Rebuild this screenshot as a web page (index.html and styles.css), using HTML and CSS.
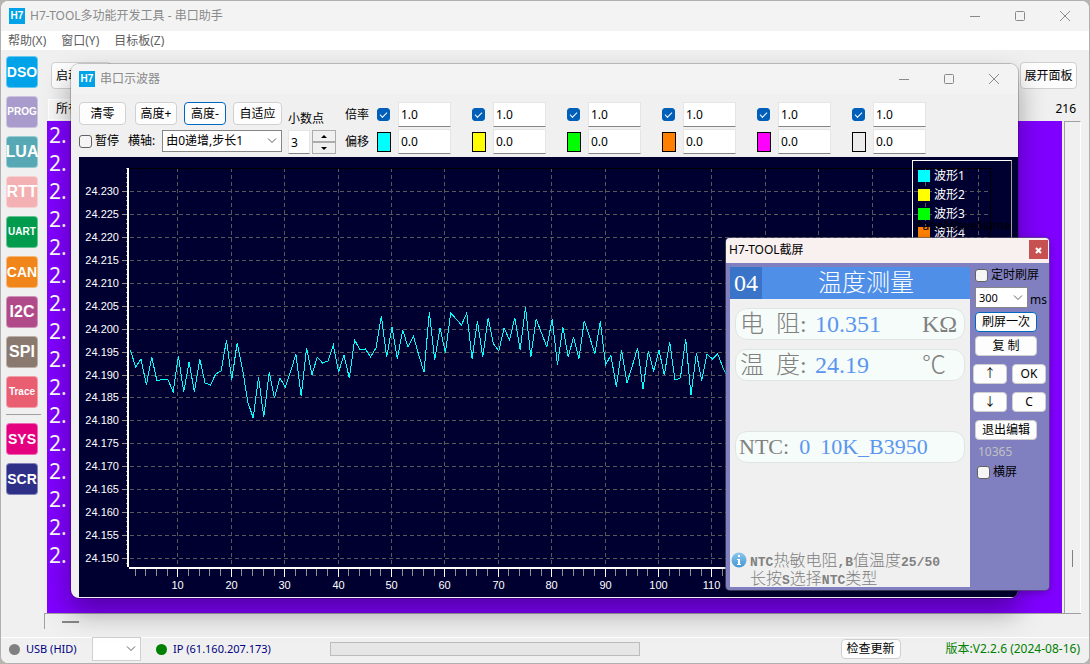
FILE: index.html
```html
<!DOCTYPE html>
<html lang="zh-CN">
<head>
    <meta charset="UTF-8">
    <title>H7-TOOL多功能开发工具 - 串口助手</title>
    <link rel="stylesheet" href="styles.css">
</head>
<body>
    <div class="app">
        <div class="titlebar">
            <span class="logo">H7</span>
            <span class="title">H7-TOOL多功能开发工具 - 串口助手</span>
            <button class="win-btn" aria-label="最小化"><svg width="12" height="12"><path d="M1 6.5h10"/></svg></button>
            <button class="win-btn" aria-label="最大化"><svg width="12" height="12"><rect x="1.5" y="1.5" width="9" height="9" rx="1"/></svg></button>
            <button class="win-btn" aria-label="关闭"><svg width="12" height="12"><path d="M1 1l10 10M11 1L1 11"/></svg></button>
        </div>
        <div class="menubar">
            <a href="#">帮助(X)</a>
            <a href="#">窗口(Y)</a>
            <a href="#">目标板(Z)</a>
        </div>
        <div class="main">
            <div class="side">
                <button class="tile dso">DSO</button>
                <button class="tile prog long">PROG</button>
                <button class="tile lua">LUA</button>
                <button class="tile rtt">RTT</button>
                <button class="tile uart long">UART</button>
                <button class="tile can">CAN</button>
                <button class="tile i2c">I2C</button>
                <button class="tile spi">SPI</button>
                <button class="tile trace long">Trace</button>
                <hr>
                <button class="tile sys">SYS</button>
                <button class="tile scr">SCR</button>
            </div>
            <div class="work">
                <div class="work-tools">
                    <button class="btn start">启动</button>
                    <button class="btn expand">展开面板</button>
                </div>
                <div class="work-tabs">
                    <button class="tab">所有</button>
                    <span class="count">216</span>
                </div>
                <div class="recv">
                    <textarea class="recv-text" aria-label="接收" readonly>2.
2.
2.
2.
2.
2.
2.
2.
2.
2.
2.
2.
2.
2.
2.
2.</textarea>
                    <div class="vscroll"><i></i></div>
                </div>
                <div class="hscroll"><i></i></div>
            </div>
        </div>
        <div class="status">
            <div class="panel usb"><i class="dot"></i>USB (HID)</div>
            <select class="port" aria-label="端口"><option></option></select>
            <div class="panel ip"><i class="dot green"></i>IP (61.160.207.173)</div>
            <div class="progress"></div>
            <button class="btn update">检查更新</button>
            <span class="version">版本:V2.2.6 (2024-08-16)</span>
        </div>

        <!-- 示波器窗口 -->
        <div class="wave">
            <div class="titlebar">
                <span class="logo">H7</span>
                <span class="title">串口示波器</span>
                <button class="win-btn" aria-label="最小化"><svg width="12" height="12"><path d="M1 6.5h10"/></svg></button>
                <button class="win-btn" aria-label="最大化"><svg width="12" height="12"><rect x="1.5" y="1.5" width="9" height="9" rx="1"/></svg></button>
                <button class="win-btn" aria-label="关闭"><svg width="12" height="12"><path d="M1 1l10 10M11 1L1 11"/></svg></button>
            </div>
            <div class="wave-tools">
                <div class="cmds">
                    <div class="row">
                        <button class="btn">清零</button>
                        <button class="btn">高度+</button>
                        <button class="btn focus">高度-</button>
                        <button class="btn">自适应</button>
                    </div>
                    <div class="row axis-row">
                        <label class="tick"><input type="checkbox">暂停</label>
                        <label for="xaxis">横轴:</label>
                        <select id="xaxis"><option>由0递增,步长1</option></select>
                    </div>
                </div>
                <div class="digits">
                    <label for="dec">小数点</label>
                    <div class="spin">
                        <input id="dec" type="text" value="3">
                        <div class="updown">
                            <button aria-label="增加"><i class="up"></i></button>
                            <button aria-label="减少"><i class="down"></i></button>
                        </div>
                    </div>
                </div>
                <div class="names"><span>倍率</span><span>偏移</span></div>
                <div class="channels">
                    <div class="ch">
                        <input type="checkbox" checked aria-label="波形1"><input type="text" value="1.0" aria-label="倍率1">
                        <i class="color c1"></i><input type="text" value="0.0" aria-label="偏移1">
                    </div>
                    <div class="ch">
                        <input type="checkbox" checked aria-label="波形2"><input type="text" value="1.0" aria-label="倍率2">
                        <i class="color c2"></i><input type="text" value="0.0" aria-label="偏移2">
                    </div>
                    <div class="ch">
                        <input type="checkbox" checked aria-label="波形3"><input type="text" value="1.0" aria-label="倍率3">
                        <i class="color c3"></i><input type="text" value="0.0" aria-label="偏移3">
                    </div>
                    <div class="ch">
                        <input type="checkbox" checked aria-label="波形4"><input type="text" value="1.0" aria-label="倍率4">
                        <i class="color c4"></i><input type="text" value="0.0" aria-label="偏移4">
                    </div>
                    <div class="ch">
                        <input type="checkbox" checked aria-label="波形5"><input type="text" value="1.0" aria-label="倍率5">
                        <i class="color c5"></i><input type="text" value="0.0" aria-label="偏移5">
                    </div>
                    <div class="ch">
                        <input type="checkbox" checked aria-label="波形6"><input type="text" value="1.0" aria-label="倍率6">
                        <i class="color c6"></i><input type="text" value="0.0" aria-label="偏移6">
                    </div>
                </div>
            </div>
            <div class="chart">
                <svg class="plot"></svg>
                <ul class="legend">
                    <li><i class="c1"></i><span>波形1</span></li>
                    <li><i class="c2"></i><span>波形2</span></li>
                    <li><i class="c3"></i><span>波形3</span></li>
                    <li><i class="c4"></i><span>波形4</span></li>
                </ul>
                <span class="panel-name">PanelWaveName</span>
            </div>
        </div>

        <!-- 截屏窗口 -->
        <div class="shot">
            <div class="shot-title">
                <span>H7-TOOL截屏</span>
                <button class="shot-close" aria-label="关闭"><svg width="7" height="7"><path d="M1 1l5 5M6 1L1 6"/></svg></button>
            </div>
            <div class="shot-body">
                <div class="lcd">
                    <div class="lcd-head"><b>04</b><span>温度测量</span></div>
                    <div class="lcd-row"><span class="name">电</span><span class="name">阻:</span><em>10.351</em><span class="unit">KΩ</span></div>
                    <div class="lcd-row"><span class="name">温</span><span class="name">度:</span><em>24.19</em><span class="unit">℃</span></div>
                    <div class="lcd-row ntc"><span>NTC:</span><em>0</em><em>10K_B3950</em></div>
                    <div class="lcd-tip">
                        <svg width="16" height="16">
                            <defs>
                                <linearGradient id="ball" x1="0" y1="0" x2="0" y2="1">
                                    <stop offset="0" stop-color="#8cc8ee"/>
                                    <stop offset="1" stop-color="#4496d2"/>
                                </linearGradient>
                            </defs>
                            <circle cx="8" cy="8" r="7.5" fill="url(#ball)"/>
                            <rect x="7" y="3" width="2" height="2" fill="#fff"/>
                            <path d="M6 7h3v5h1v1H6v-1h1V8H6z" fill="#fff"/>
                        </svg>
                        <p><b>NTC</b>热敏电阻<b>,B</b>值温度<b>25/50</b><br>长按<b>S</b>选择<b>NTC</b>类型</p>
                    </div>
                </div>
                <div class="shot-side">
                    <label class="tick"><input type="checkbox">定时刷屏</label>
                    <div class="timer">
                        <select id="ms"><option>300</option></select>
                        <label for="ms">ms</label>
                    </div>
                    <button class="btn focus">刷屏一次</button>
                    <button class="btn">复 制</button>
                    <div class="keys">
                        <button class="btn">↑</button>
                        <button class="btn">OK</button>
                        <button class="btn">↓</button>
                        <button class="btn">C</button>
                    </div>
                    <button class="btn">退出编辑</button>
                    <span class="bytes">10365</span>
                    <label class="tick land"><input type="checkbox">横屏</label>
                </div>
            </div>
        </div>
    </div>
    <script>
        var oPlot = document.querySelector('.plot');
        var NS = 'http://www.w3.org/2000/svg';
        var left = 50, top0 = 11, right = 912, bottom = 410;
        //采样点
        var data = [193,210,202,228,200,224,222,222,235,199,235,205,235,202,226,228,217,214,183,223,
            186,212,245,261,220,260,215,241,221,230,215,197,239,191,218,200,206,204,188,215,
            198,221,183,193,192,200,191,159,200,170,202,173,190,179,198,215,155,203,171,196,
            156,162,168,156,202,164,200,161,187,194,171,183,161,193,150,200,162,176,190,162,
            208,170,200,180,202,164,180,197,164,208,198,230,193,226,209,191,232,194,214,193,
            218,185,223,221,182,238,196,224,197,202,197,211,222];

        function add(name,attrs,text){
            var el = document.createElementNS(NS,name);
            for(var k in attrs){
                el.setAttribute(k,attrs[k]);
            }
            if(text) el.textContent = text;
            oPlot.appendChild(el);
        }

        function line(x1,y1,x2,y2,cls){
            add('line',{x1:x1,y1:y1,x2:x2,y2:y2,'class':cls});
        }

        function px(n){
            return 46 + 5.34 * n;
        }

        //横线和纵轴刻度
        for(var i=0;i<17;i++){
            var y = Math.round(34 + i * 22.94) + 0.5;
            line(left + 1,y,right,y,'grid');
            line(43,y,48,y,'minor');
            add('text',{x:40,y:Math.floor(y)+4,'class':'ylab'},(24.23 - i * 0.005).toFixed(3));
        }
        for(var j=-5;j<=81;j++){
            var my = Math.round(34 + j * 4.588) + 0.5;
            if(my < bottom) line(47,my,48,my,'minor');
        }

        //竖线和横轴刻度
        for(var n=2;n<=162;n+=2){
            var x = Math.round(px(n)) - 0.5;
            if(n % 10 == 0){
                line(x,top0,x,bottom,'grid');
                line(x,412,x,420,'major');
                if(n <= data.length) add('text',{x:x,y:432,'class':'xlab'},String(n));
            }else{
                line(x,412,x,419,'minor');
            }
        }

        line(left,top0 + 0.5,right,top0 + 0.5,'edge');
        line(right - 0.5,top0,right - 0.5,bottom,'edge');
        line(49,top0,49,bottom,'axis');
        line(left,411,right,411,'axis');

        var pts = [];
        for(var m=0;m<data.length;m++){
            pts.push(px(m + 1).toFixed(1) + ',' + data[m]);
        }
        add('polyline',{points:pts.join(' '),'class':'curve'});
    </script>
</body>
</html>
```

FILE: styles.css
```css
*{margin: 0;padding: 0;box-sizing: border-box;list-style: none;}
body{
    height: 100vh;
    background: #b9b4ae;
    font: 12px/16px "Noto Sans","Noto Sans CJK SC",sans-serif;
    color: #000;
    overflow: hidden;
}
button,input,select,textarea{
    font: inherit;
    color: inherit;
}
a{text-decoration: none;color: inherit;}
.app{
    position: relative;
    display: flex;
    flex-direction: column;
    height: 100vh;
    border: 1px solid #b0b0b0;
    border-radius: 8px;
    background: #f0f0f0;
    overflow: hidden;
}

/* 标题栏 */
.titlebar{
    display: flex;
    align-items: center;
    height: 30px;
    padding: 0 2px 0 8px;
    background: #f3f3f3;
    color: #8a8a8a;
}
.logo{
    width: 16px;
    height: 16px;
    margin-right: 5px;
    background: #00a2e8;
    color: #fff;
    font: bold 10px/16px "Liberation Sans",sans-serif;
    text-align: center;
}
.title{flex: 1;}
.win-btn{
    display: flex;
    align-items: center;
    justify-content: center;
    width: 45px;
    height: 30px;
    border: 0;
    background: none;
}
.win-btn svg{
    fill: none;
    stroke: #8a8a8a;
}
.menubar{
    display: flex;
    gap: 15px;
    height: 19px;
    padding-left: 7px;
    background: #fff;
    color: #606060;
    line-height: 20px;
}

/* 按钮和输入框 */
.btn{
    border: 1px solid #d0d0d0;
    border-radius: 4px;
    background: #fdfdfd;
    white-space: nowrap;
}
.btn.focus{border-color: #0067c0;}
input[type=checkbox]{
    appearance: none;
    width: 13px;
    height: 13px;
    border: 1px solid #626262;
    border-radius: 3px;
    background: #f5f5f5;
}
input[type=checkbox]:checked{
    border-color: #005fb8;
    background: #005fb8;
}
input[type=checkbox]:checked::before{
    content: "";
    display: block;
    width: 6px;
    height: 3px;
    margin: 3px auto 0;
    border: solid #fff;
    border-width: 0 0 1px 1px;
    transform: rotate(-45deg);
}
input[type=text]{
    border: 1px solid #e5e5e5;
    border-bottom-color: #868686;
    background: #fff;
}
select{
    appearance: none;
    border: 1px solid #868686;
    background: #fff url("data:image/svg+xml,%3Csvg xmlns='http://www.w3.org/2000/svg' width='10' height='6'%3E%3Cpath d='M1 .5l4 4 4-4' fill='none' stroke='%23606060'/%3E%3C/svg%3E") no-repeat right 4px center;
}
.tick{
    display: flex;
    align-items: center;
    gap: 3px;
}

/* 主界面 */
.main{
    flex: 1;
    display: flex;
    min-height: 0;
}
.side{
    display: flex;
    flex-direction: column;
    gap: 8px;
    width: 46px;
    padding: 6px 5px;
}
.side hr{
    width: 35px;
    margin-top: -2px;
    border: 0;
    border-top: 1px solid #a0a0a0;
}
.tile{
    width: 32px;
    height: 32px;
    border: 1px solid rgba(255,255,255,.4);
    border-radius: 4px;
    color: #fff;
    font: bold 14px/30px "Liberation Sans",sans-serif;
    display: flex;
    align-items: center;
    justify-content: center;
}
.long{font-size: 10px;}
.dso{background: #00a2e8;}
.prog{background: #a99ccc;}
.lua{background: #56a8b4;}
.rtt{background: #f3b1b3;}
.uart{background: #009b4c;}
.can{background: #f08519;}
.i2c{background: #b04a88;}
.spi{background: #8a796f;}
.trace{background: #ea5e72;}
.sys{background: #e4007f;}
.scr{background: #2e3088;}
.lua,.rtt,.i2c,.spi{font-size: 16px;}
.work{
    flex: 1;
    display: flex;
    flex-direction: column;
    padding: 12px 8px 8px 0;
}
.work-tools{
    display: flex;
    justify-content: space-between;
    padding: 0 4px;
}
.work-tools .btn{height: 27px;}
.start{
    width: 60px;
    padding-left: 4px;
    text-align: left;
}
.expand{width: 57px;}
.work-tabs{
    display: flex;
    justify-content: space-between;
    align-items: center;
    height: 32px;
    padding: 8px 5px 0 0;
}
.tab{
    width: 46px;
    height: 21px;
    margin-left: 1px;
    padding-left: 7px;
    border: 1px solid #fff;
    background: #f7f7f7;
    text-align: left;
}
.count{font-size: 12px;}
.recv{
    flex: 1;
    display: flex;
    gap: 2px;
    min-height: 0;
}
.recv-text{
    flex: 1;
    padding-left: 2px;
    border: 0;
    background: #8000ff;
    color: #fff;
    font-size: 21px;
    line-height: 28px;
    resize: none;
    overflow: hidden;
}
.vscroll{
    display: flex;
    flex-direction: column;
    justify-content: flex-end;
    align-items: center;
    width: 17px;
    padding-bottom: 46px;
    border-left: 1px solid #a0a0a0;
    border-top: 1px solid #a0a0a0;
    border-right: 1px solid #fff;
}
.vscroll i{
    width: 1px;
    height: 17px;
    background: #808080;
}
.hscroll{
    display: flex;
    align-items: center;
    height: 16px;
    margin-left: -3px;
    padding-left: 17px;
    border-left: 1px solid #a0a0a0;
    border-top: 1px solid #a0a0a0;
}
.hscroll i{
    width: 17px;
    height: 2px;
    background: #868686;
}

/* 状态栏 */
.status{
    display: flex;
    align-items: center;
    height: 26px;
    padding: 0 9px 3px 0;
    border-top: 1px solid #fff;
    background: #f0f0f0;
    color: #000080;
    font-size: 11px;
}
.panel{
    display: flex;
    align-items: center;
    gap: 6px;
    padding-left: 8px;
}
.usb{width: 91px;}
.ip{
    width: 189px;
    padding-left: 15px;
}
.dot{
    width: 11px;
    height: 11px;
    border-radius: 50%;
    background: #808080;
}
.dot.green{background: #008000;}
.port{
    width: 49px;
    height: 24px;
    border-color: #d0d0d0;
}
.progress{
    width: 310px;
    height: 14px;
    border: 1px solid #bcbcbc;
    background: #e6e6e6;
}
.update{
    width: 60px;
    height: 20px;
    margin-left: auto;
    margin-right: 45px;
    color: #000;
    font-size: 12px;
}
.version{
    color: #008000;
    font-size: 12px;
}

/* 示波器 */
.wave{
    position: absolute;
    left: 70px; top: 63px;
    right: 71px; bottom: 65px;
    display: flex;
    flex-direction: column;
    border-radius: 8px;
    background: #f0f0f0;
    box-shadow: 0 0 0 1px rgba(0,0,0,.2), 0 14px 28px rgba(0,0,0,.35);
    overflow: hidden;
}
.wave-tools{
    display: flex;
    height: 63px;
    padding: 8px 8px 0;
}
.cmds{
    display: flex;
    flex-direction: column;
    gap: 5px;
    width: 209px;
}
.row{
    display: flex;
    align-items: center;
    gap: 7px;
}
.row .btn{
    width: 42px;
    height: 23px;
}
.row .btn:first-child{
    width: 47px;
    margin-right: 2px;
}
.row .btn:last-child{width: 49px;}
.axis-row label + label{margin-left: 2px;}
.axis-row select{
    flex: 1;
    height: 22px;
    margin-right: 6px;
    padding-left: 3px;
}
.digits{
    width: 57px;
    padding-top: 9px;
}
.digits label{display: block;}
.spin{
    display: flex;
    gap: 2px;
    margin-top: 3px;
}
.spin input{
    width: 22px;
    height: 24px;
    padding-left: 2px;
}
.updown button{
    display: flex;
    align-items: center;
    justify-content: center;
    width: 24px;
    height: 12px;
    border: 1px solid #acacac;
    background: #f0f0f0;
}
.up,.down{
    border: 3px solid transparent;
}
.up{border-bottom-color: #000;border-top: 0;}
.down{border-top-color: #000;border-bottom: 0;}
.names{
    display: flex;
    flex-direction: column;
    gap: 11px;
    width: 32px;
    padding-top: 5px;
}
.channels{
    display: flex;
    gap: 21px;
}
.ch{
    display: grid;
    grid-template-columns: 14px 53px;
    gap: 2px 7px;
    align-items: center;
    align-content: start;
}
.ch input[type=text]{
    width: 53px;
    height: 25px;
    padding-left: 2px;
}
.color{
    height: 20px;
    border: 1px solid #000;
}
.c1{background: #00ffff;}
.c2{background: #ffff00;}
.c3{background: #00ff00;}
.c4{background: #ff8000;}
.c5{background: #ff00ff;}
.c6{background: #ececec;}
.chart{
    position: relative;
    flex: 1;
    margin: 0 0 1px 8px;
    background: #000030;
    overflow: hidden;
}
.plot{
    display: block;
    width: 100%;
    height: 100%;
    shape-rendering: crispEdges;
}
.grid{stroke: #585858;stroke-dasharray: 4 3;}
.minor{stroke: #909090;}
.major{stroke: #fff;}
.edge{stroke: #000;}
.axis{stroke: #fff;stroke-width: 2px;}
.curve{fill: none;stroke: #00ffff;}
.plot text{
    fill: #fff;
    font: 11px "Liberation Sans",sans-serif;
}
.ylab{text-anchor: end;}
.xlab{text-anchor: middle;}
.legend{
    position: absolute;
    right: 6px; top: 3px;
    width: 100px;
    height: 120px;
    padding: 5px;
    border: 1px solid #fff;
    border-right-color: #a0a0a0;
    color: #fff;
}
.legend li{
    display: flex;
    align-items: center;
    gap: 4px;
    height: 19px;
}
.legend i{
    width: 12px;
    height: 12px;
}
.legend span{
    line-height: 14px;
    background: #000030;
}
.panel-name{
    position: absolute;
    right: 7px; top: 61px;
    color: #000;
}

/* 截屏窗口 */
.shot{
    position: absolute;
    left: 725px; top: 237px;
    width: 323px;
    border-radius: 4px;
    background: #8080c0;
    box-shadow: 0 0 0 1px rgba(90,90,110,.6), 0 2px 8px rgba(0,0,0,.3);
    overflow: hidden;
}
.shot-title{
    display: flex;
    align-items: center;
    justify-content: space-between;
    height: 25px;
    padding: 0 1px 2px 3px;
    background: #f9f0f0;
}
.shot-close{
    width: 19px;
    height: 19px;
    border: 0;
    background: #c75050;
    line-height: 1;
}
.shot-close svg{
    stroke: #fff;
    stroke-width: 2px;
}
.shot-body{
    display: flex;
    padding: 4px 0 3px 4px;
}
.lcd{
    flex: none;
    display: flex;
    flex-direction: column;
    gap: 9px;
    width: 240px;
    height: 320px;
    background: #f0f0f0;
    color: #808080;
    font: 24px/32px "Liberation Serif","Noto Sans CJK SC",serif;
    font-weight: 300;
}
.lcd-head{
    display: flex;
    height: 32px;
    background: #508fe8;
    color: #fff;
}
.lcd-head b{
    width: 32px;
    background: #3a74c8;
    font-weight: normal;
    text-align: center;
}
.lcd-head span{
    flex: 1;
    padding-left: 32px;
    text-align: center;
    padding-right: 32px;
}
.lcd-row{
    display: flex;
    height: 32px;
    margin: 0 5px;
    padding: 0 4px;
    border: 1px solid #dfe6e2;
    border-radius: 12px;
    background: #f6fcf9;
    line-height: 30px;
}
.lcd-row em{
    color: #5a96f0;
    font-style: normal;
}
.name{width: 36px;}
.name + em{margin-left: 3px;}
.unit{
    width: 38px;
    margin-left: auto;
}
.lcd-row.ntc{
    gap: 10px;
    margin-top: 41px;
    padding: 0 3px;
    font-size: 22px;
}
.lcd-tip{
    display: flex;
    gap: 3px;
    margin-top: auto;
    padding: 0 1px 1px;
    font: 16px/18px "Noto Sans CJK SC",sans-serif;
    font-weight: 300;
}
.lcd-tip svg{margin-top: 2px;}
.lcd-tip b{
    font: bold 13px/0 "Liberation Mono",monospace;
}
.shot-side{
    flex: 1;
    display: flex;
    flex-direction: column;
    align-items: flex-start;
    gap: 4px;
    padding-left: 5px;
}
.shot-side .btn{
    width: 62px;
    height: 20px;
    line-height: 16px;
}
.timer{
    display: flex;
    align-items: flex-end;
    gap: 2px;
}
.timer select{
    width: 53px;
    height: 21px;
    padding-left: 3px;
    font-size: 11px;
}
.keys{
    display: grid;
    grid-template-columns: 34px 34px;
    gap: 8px 5px;
    margin: 4px 0 4px -2px;
}
.shot-side .keys .btn{width: 34px;}
.bytes{
    padding-left: 3px;
    color: #c0c0c0;
}
.land{padding-left: 2px;}
```
